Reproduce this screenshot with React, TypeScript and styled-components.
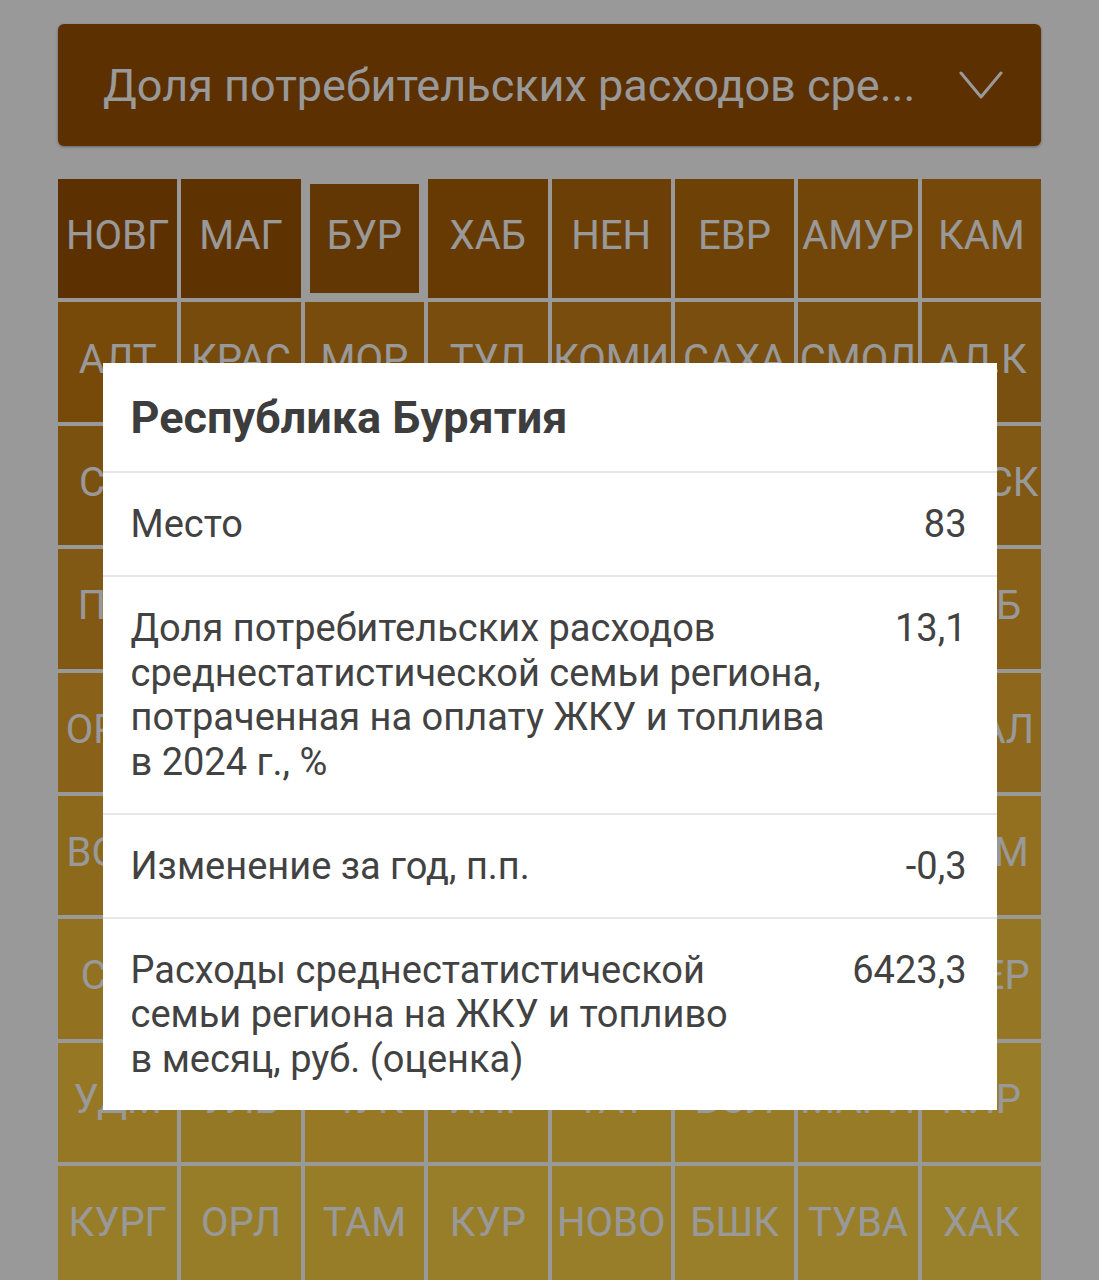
import styled, { createGlobalStyle } from "styled-components";

const GlobalStyle = createGlobalStyle`
  html, body {
    margin: 0;
    padding: 0;
    background: #ffffff;
    font-family: Roboto, "Noto Sans", sans-serif;
  }
`;

const Screen = styled.div`
  height: 100vh;
  overflow: hidden;
  padding: 24px 58px 0;
  box-sizing: border-box;
`;

const Picker = styled.div`
  height: 122px;
  box-sizing: border-box;
  display: flex;
  align-items: center;
  gap: 24px;
  padding: 0 38px 0 45px;
  background: #995000;
  border-radius: 6px;
  box-shadow: 0 1px 3px rgba(0, 0, 0, 0.35);
`;

const PickerLabel = styled.span`
  flex: 1;
  color: #ffffff;
  font-size: 45px;
  white-space: nowrap;
  overflow: hidden;
`;

const TileGrid = styled.div`
  margin-top: 33px;
  display: grid;
  grid-template-columns: repeat(8, minmax(0, 1fr));
  gap: 4px;
`;

const Tile = styled.div<{ $bg: string; $selected?: boolean }>`
  aspect-ratio: 1;
  min-width: 0;
  box-sizing: border-box;
  display: flex;
  align-items: center;
  justify-content: center;
  padding-bottom: 6px;
  background: ${(p) => p.$bg};
  border: ${(p) => (p.$selected ? "5px solid #ffffff" : "none")};
  color: #ffffff;
  font-size: 40px;
  white-space: nowrap;
  overflow: visible;
`;

const Backdrop = styled.div`
  position: fixed;
  inset: 0;
  background: rgba(0, 0, 0, 0.4);
  display: flex;
  justify-content: center;
  align-items: flex-start;
  padding-top: 363px;
`;

const Dialog = styled.div`
  width: 894px;
  background: #ffffff;
  color: #424242;
`;

const DialogTitle = styled.h2`
  margin: 0;
  padding: 28px 30px 27px 28px;
  font-size: 45px;
  line-height: 53px;
  font-weight: bold;
  color: #3d3d3d;
`;

const StatRow = styled.div`
  display: flex;
  align-items: flex-start;
  gap: 40px;
  padding: 29px 30px 28.5px 28px;
  border-top: 2px solid #e6e6e6;
  font-size: 38px;
  line-height: 44.5px;
`;

const StatLabel = styled.div`
  flex: 1;
`;

const StatValue = styled.div`
  text-align: right;
  white-space: nowrap;
`;

const regions = [
  "НОВГ", "МАГ", "БУР", "ХАБ", "НЕН", "ЕВР", "АМУР", "КАМ",
  "АЛТ", "КРАС", "МОР", "ТУЛ", "КОМИ", "САХА", "СМОЛ", "АЛ.К",
  "САР", "ИРК", "КИР", "КОСТ", "ЧЕЧ", "ПСК", "ЯРО", "ОМСК",
  "ПЕН", "КЕМ", "ЛИП", "ТОМ", "ИВАН", "ВЛАД", "КАЛУ", "СПБ",
  "ОРЕН", "РЯЗ", "БРЯН", "АРХ", "МУР", "ЧЕЛ", "ЛЕН", "КБАЛ",
  "ВОЛГ", "САМ", "ПРИМ", "КРЫМ", "ДАГ", "АДЫ", "КАЛМ", "ТЮМ",
  "СЕВ", "МОСК", "БЕЛ", "ВОРН", "АСТР", "ПЕРМ", "ЯНАО", "ТВЕР",
  "УДМ", "УЛЬ", "ЧУК", "ИНГ", "ТАТ", "ВОЛ", "МАРИ", "КИР",
  "КУРГ", "ОРЛ", "ТАМ", "КУР", "НОВО", "БШК", "ТУВА", "ХАК",
];

// colour ramp by rank, dark brown for the first places to gold for the last
const stops: [number, [number, number, number]][] = [
  [0, [153, 80, 0]],
  [7, [197, 123, 17]],
  [15, [203, 133, 27]],
  [31, [227, 160, 40]],
  [47, [243, 187, 53]],
  [63, [253, 207, 67]],
  [71, [255, 213, 70]],
];

function rankColor(i: number) {
  for (let s = 1; s < stops.length; s++) {
    const [i0, c0] = stops[s - 1];
    const [i1, c1] = stops[s];
    if (i <= i1) {
      const t = (i - i0) / (i1 - i0);
      const c = c0.map((v, k) => Math.round(v + (c1[k] - v) * t));
      return `rgb(${c[0]}, ${c[1]}, ${c[2]})`;
    }
  }
  return "rgb(255, 213, 70)";
}

const stats = [
  { label: "Место", value: "83" },
  {
    label:
      "Доля потребительских расходов среднестатистической семьи региона, потраченная на оплату ЖКУ и топлива в\u00a02024\u00a0г.,\u00a0%",
    value: "13,1",
  },
  { label: "Изменение за год, п.п.", value: "-0,3" },
  {
    label:
      "Расходы среднестатистической семьи региона на ЖКУ и топливо в\u00a0месяц, руб.\u00a0(оценка)",
    value: "6423,3",
  },
];

function Chevron() {
  return (
    <svg width="44" height="28" viewBox="0 0 44 28" fill="none">
      <polyline
        points="2,2 22,26 42,2"
        stroke="#ffffff"
        strokeWidth="3"
        strokeLinecap="round"
        strokeLinejoin="round"
      />
    </svg>
  );
}

export default function App() {
  return (
    <>
      <GlobalStyle />
      <Screen>
        <Picker>
          <PickerLabel>Доля потребительских расходов сре...</PickerLabel>
          <Chevron />
        </Picker>

        <TileGrid>
          {regions.map((name, i) => (
            <Tile key={i} $bg={rankColor(i)} $selected={name === "БУР"}>
              {name}
            </Tile>
          ))}
        </TileGrid>
      </Screen>

      <Backdrop>
        <Dialog>
          <DialogTitle>Республика Бурятия</DialogTitle>
          {stats.map((s) => (
            <StatRow key={s.label}>
              <StatLabel>{s.label}</StatLabel>
              <StatValue>{s.value}</StatValue>
            </StatRow>
          ))}
        </Dialog>
      </Backdrop>
    </>
  );
}
